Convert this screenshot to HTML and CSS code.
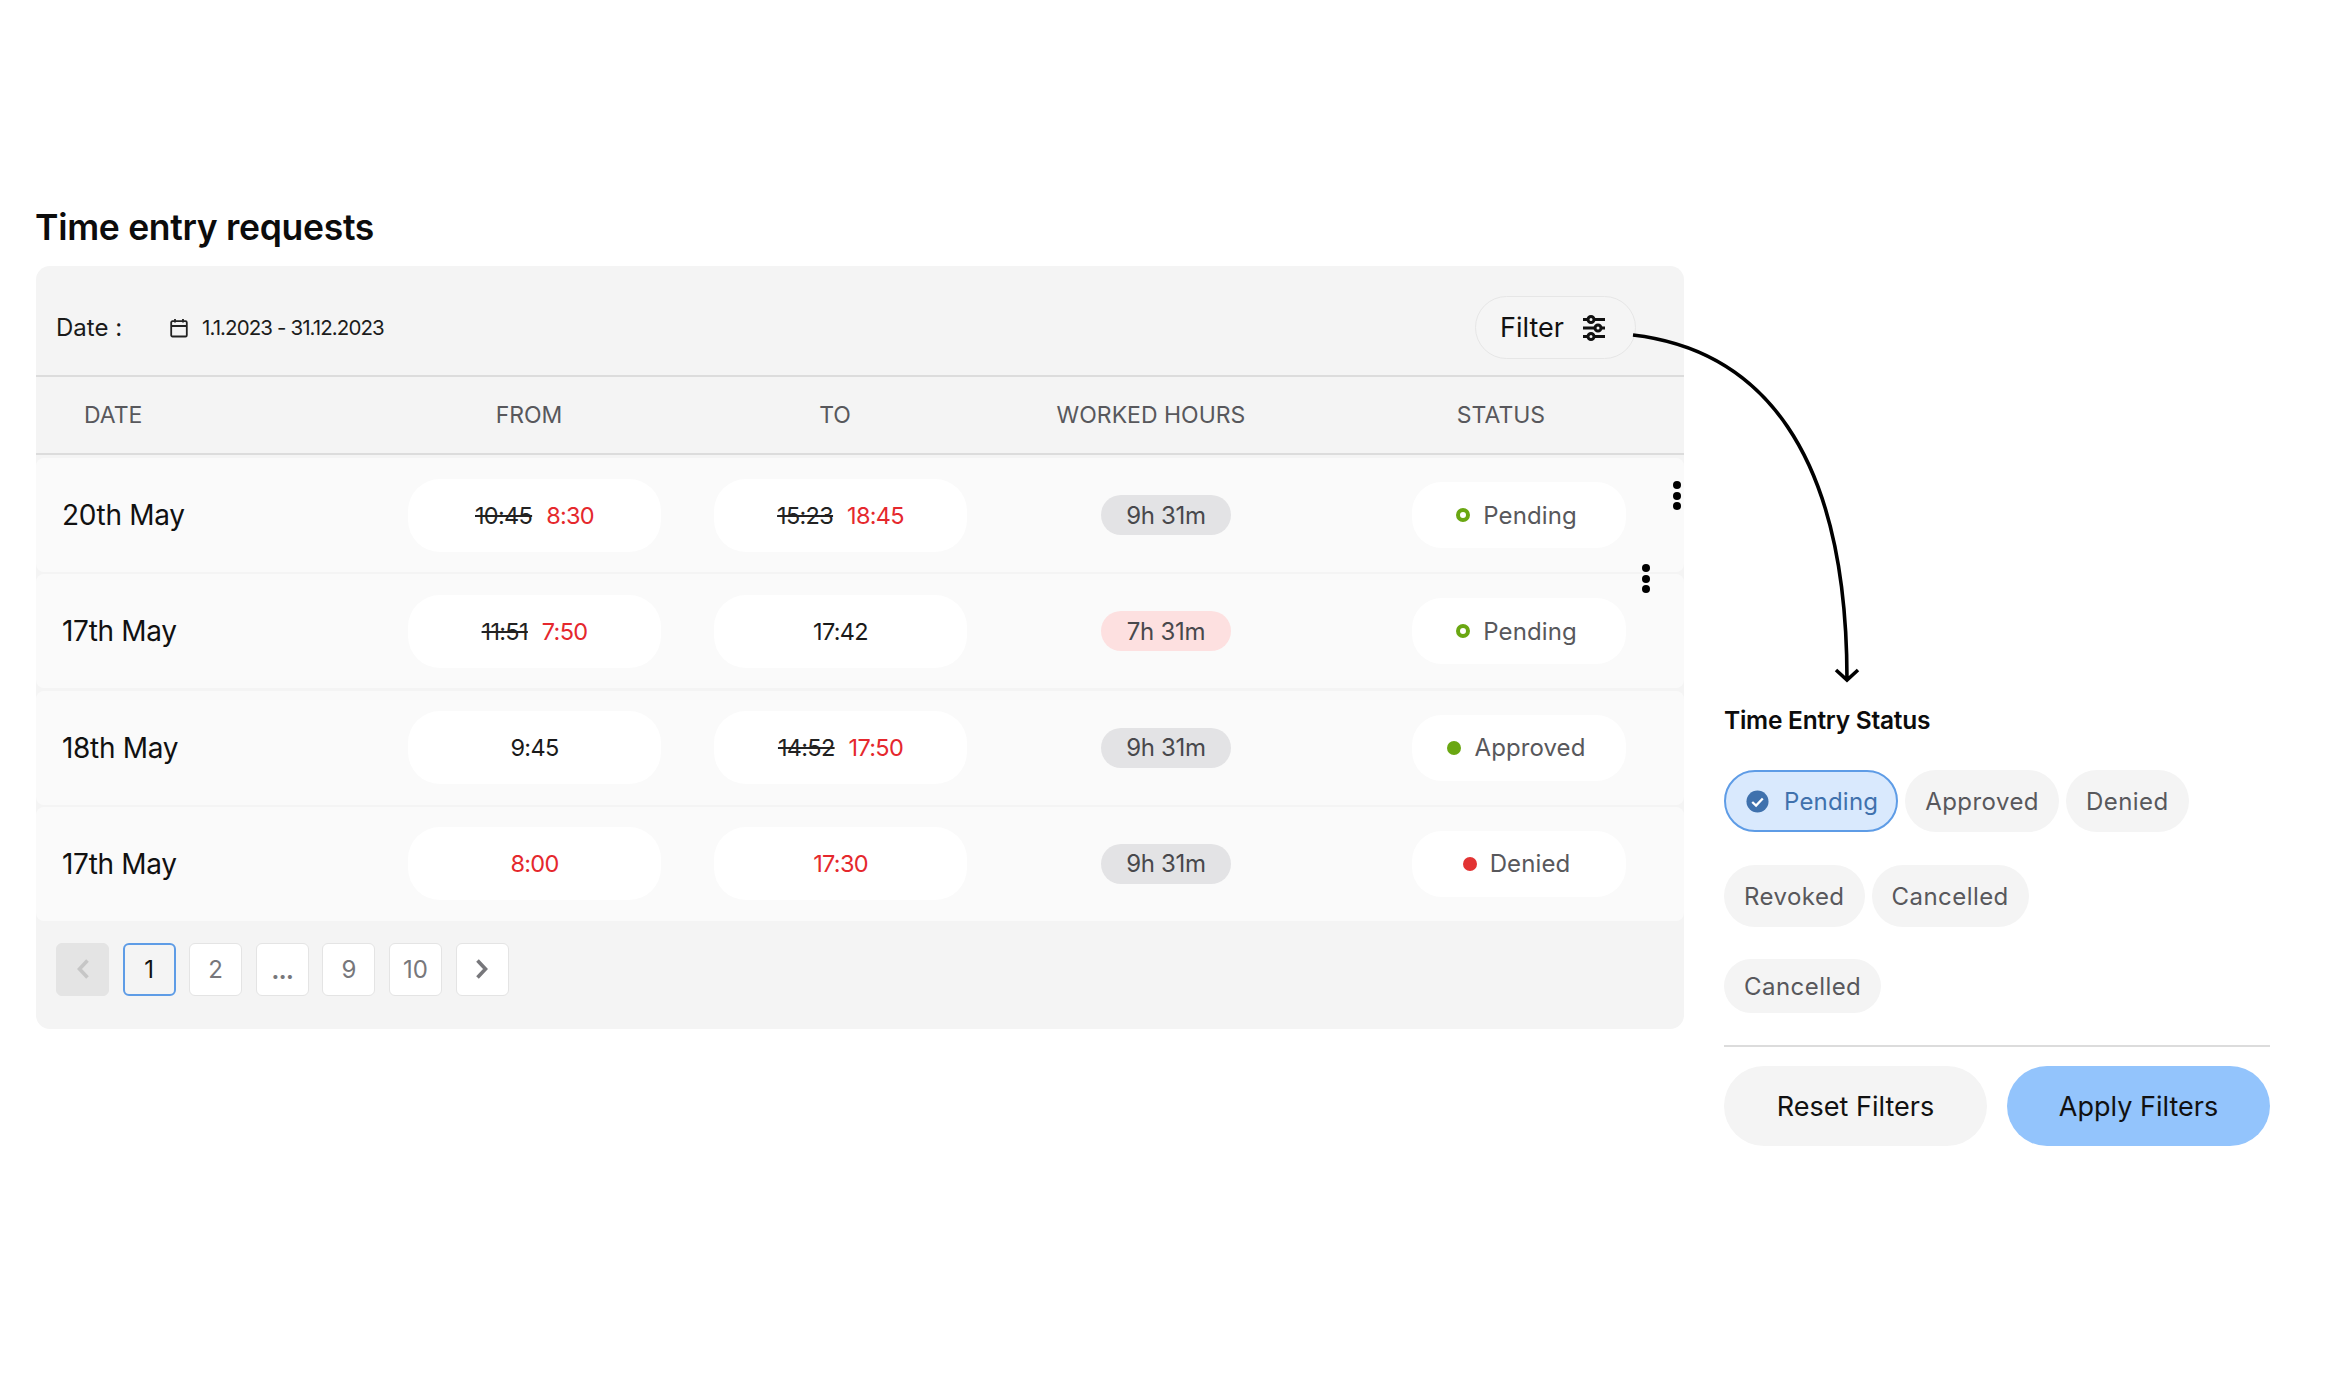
FILE: index.html
```html
<!DOCTYPE html>
<html lang="en">
<head>
<meta charset="utf-8">
<title>Time entry requests</title>
<link rel="stylesheet" href="styles.css">
</head>
<body>
<div class="page">
  <section class="main">
    <h1 class="title">Time entry requests</h1>
    <div class="card">
      <div class="toolbar">
        <span class="date-label">Date :</span>
        <svg class="cal" viewBox="0 0 18 20" width="18" height="20"><path d="M1.2 4.5a1.3 1.3 0 0 1 1.3-1.3h13a1.3 1.3 0 0 1 1.3 1.3v12.7a1.3 1.3 0 0 1-1.3 1.3h-13a1.3 1.3 0 0 1-1.3-1.3zM1.2 8h15.6M5 1v3.5M13 1v3.5" fill="none" stroke="#222" stroke-width="1.8"/></svg>
        <span class="date-range">1.1.2023 - 31.12.2023</span>
        <button class="filter-btn">Filter
          <svg viewBox="0 0 24 26" width="24" height="26"><g fill="none" stroke="#111" stroke-width="3"><path d="M1 4.5h5M12 4.5h11M1 13h12M19 13h4M1 21.5h5M12 21.5h11"/><circle cx="9" cy="4.5" r="3"/><circle cx="16" cy="13" r="3"/><circle cx="9" cy="21.5" r="3"/></g></svg>
        </button>
      </div>
      <div class="thead">
        <span>DATE</span><span class="c">FROM</span><span class="c">TO</span><span class="c">WORKED HOURS</span><span class="c">STATUS</span>
      </div>
      <div class="rows">
        <div class="row">
          <span class="day">20th May</span>
          <div class="time"><s>10:45</s><span class="red">8:30</span></div>
          <div class="time"><s>15:23</s><span class="red">18:45</span></div>
          <span class="hours">9h 31m</span>
          <div class="status"><i class="dot ring"></i>Pending</div>
        </div>
        <div class="row">
          <span class="day">17th May</span>
          <div class="time"><s>11:51</s><span class="red">7:50</span></div>
          <div class="time">17:42</div>
          <span class="hours short">7h 31m</span>
          <div class="status"><i class="dot ring"></i>Pending</div>
        </div>
        <div class="row">
          <span class="day">18th May</span>
          <div class="time">9:45</div>
          <div class="time"><s>14:52</s><span class="red">17:50</span></div>
          <span class="hours">9h 31m</span>
          <div class="status"><i class="dot green"></i>Approved</div>
        </div>
        <div class="row">
          <span class="day">17th May</span>
          <div class="time"><span class="red">8:00</span></div>
          <div class="time"><span class="red">17:30</span></div>
          <span class="hours">9h 31m</span>
          <div class="status"><i class="dot redd"></i>Denied</div>
        </div>
      </div>
      <nav class="pager">
        <a class="pg disabled"><svg viewBox="0 0 14 24" width="14" height="24"><path d="M11.500 3.500 3.500 12l8 8.500" fill="none" stroke="#c6c6c6" stroke-width="3.600"/></svg></a>
        <a class="pg active">1</a>
        <a class="pg">2</a>
        <a class="pg dots">...</a>
        <a class="pg">9</a>
        <a class="pg">10</a>
        <a class="pg"><svg viewBox="0 0 14 24" width="14" height="24"><path d="M2.500 3.500 10.500 12l-8 8.500" fill="none" stroke="#77777b" stroke-width="3.600"/></svg></a>
      </nav>
      <span class="kebab k1"><i></i><i></i><i></i></span>
      <span class="kebab k2"><i></i><i></i><i></i></span>
    </div>
  </section>
  <aside class="panel">
    <h2 class="panel-title">Time Entry Status</h2>
    <div class="chips">
      <div class="chip-row">
        <span class="chip on"><svg viewBox="0 0 24 24" width="23" height="23"><circle cx="12" cy="12" r="11.500" fill="#3f71ad"/><path d="M6.500 12.500l4 3.800 7-7.500" fill="none" stroke="#fff" stroke-width="2.400"/></svg>Pending</span>
        <span class="chip">Approved</span>
        <span class="chip">Denied</span>
      </div>
      <div class="chip-row">
        <span class="chip">Revoked</span>
        <span class="chip">Cancelled</span>
      </div>
      <div class="chip-row">
        <span class="chip low">Cancelled</span>
      </div>
    </div>
    <div class="actions">
      <button class="act">Reset Filters</button>
      <button class="act primary">Apply Filters</button>
    </div>
  </aside>
  <svg class="arrow" viewBox="0 0 2328 1376" width="2328" height="1376"><path d="M1633 335C1760 350 1847 450 1847 680M1836 670l11 10 11-10" fill="none" stroke="#000" stroke-width="3.600"/></svg>
</div>
</body>
</html>
```
FILE: styles.css
```css
* { box-sizing: border-box; }
html, body { margin: 0; background: #fff; }
body { font-family: Inter, "Open Sans", "Liberation Sans", sans-serif; color: #111; }
.page { position: relative; width: 2328px; height: 1376px; display: flex; gap: 40px; padding-left: 36px; overflow: hidden; }
.main { width: 1648px; padding-top: 203px; flex: none; }
.title { margin: 0 0 14px -1px; font-size: 35.5px; line-height: 49px; font-weight: 600; letter-spacing: -.3px; color: #0c0c0c; }
.card { position: relative; background: #f4f4f4; border-radius: 14px; height: 763px; }
.toolbar { height: 111px; border-bottom: 2px solid #dcdcdc; display: flex; align-items: center; padding: 14px 48px 0 20px; }
.date-label { font-size: 24px; color: #1a1a1a; width: 114px; }
.cal { flex: none; margin-right: 14px; }
.date-range { font-size: 20.5px; color: #1c1c1c; letter-spacing: -.9px; }
.filter-btn { margin-left: auto; width: 161px; height: 63px; border: 1.5px solid #e6e6e6; background: #f5f5f5; border-radius: 32px; font: 400 27px Inter, sans-serif; color: #111; display: flex; align-items: center; justify-content: center; gap: 18px; padding: 0 5px 0 0; }
.thead { height: 78px; border-bottom: 2px solid #dcdcdc; display: grid; grid-template-columns: 260px 242px 242px 262px 310px; column-gap: 64px; align-items: center; padding-left: 48px; font-size: 23px; color: #58585c; }
.thead .c { text-align: center; }
.rows { display: flex; flex-direction: column; gap: 2.33px; padding-top: 3px; }
.row { height: 114px; background: #fafafa; border-radius: 8px; display: grid; grid-template-columns: 293px 253px 253px 339px 214px; column-gap: 53px; align-items: center; padding-left: 26px; }
.day { font-size: 28px; color: #111; letter-spacing: -.3px; }
.time { height: 73px; background: #fff; border-radius: 32px; display: flex; align-items: center; justify-content: center; gap: 14px; font-size: 23.5px; color: #1a1a1a; letter-spacing: -.7px; }
.time s { color: #222; }
.red { color: #e5282d; }
.hours { justify-self: start; margin-left: 81px; width: 130px; height: 40px; border-radius: 20px; background: #e3e3e5; display: flex; align-items: center; justify-content: center; font-size: 24px; color: #48484c; letter-spacing: -.3px; }
.hours.short { background: #fde0e0; }
.status { height: 66px; background: #fff; border-radius: 30px; display: flex; align-items: center; justify-content: center; gap: 13px; font-size: 24px; color: #58585c; letter-spacing: .1px; padding-right: 5px; }
.dot { width: 14px; height: 14px; border-radius: 50%; flex: none; }
.dot.ring { border: 4px solid #6aa712; }
.dot.green { background: #6aa712; }
.dot.redd { background: #e23333; }
.pager { display: flex; gap: 13.6px; padding: 22px 0 0 20px; }
.pg { width: 53px; height: 53px; border: 1.5px solid #e4e4e4; background: #fff; border-radius: 6px; display: flex; align-items: center; justify-content: center; font-size: 24px; color: #77777b; }
.pg.disabled { background: #e4e4e4; border-color: #e4e4e4; }
.pg.active { background: #f4f4f4; border: 2px solid #5e9ce6; color: #111; }
.pg.dots { align-items: flex-end; padding-bottom: 13px; line-height: 1; font-size: 22px; font-weight: 800; letter-spacing: -.5px; }
.kebab { position: absolute; width: 8px; display: flex; flex-direction: column; gap: 2.5px; }
.kebab i { width: 8px; height: 8px; border-radius: 50%; background: #000; }
.k1 { left: 1637px; top: 215px; }
.k2 { left: 1606px; top: 298px; }
.panel { width: 546px; flex: none; padding-top: 703px; }
.panel-title { margin: 0 0 33px; font-size: 24.5px; line-height: 34px; font-weight: 600; color: #0c0c0c; letter-spacing: -.25px; }
.chips { display: flex; flex-direction: column; gap: 33px; padding-bottom: 32px; border-bottom: 2px solid #dcdcdc; }
.chip-row { display: flex; gap: 7px; }
.chip-row + .chip-row + .chip-row { margin-top: -1px; }
.chip { height: 62px; padding: 0 20px; border-radius: 31px; background: #f4f4f4; display: flex; align-items: center; font-size: 24px; color: #58585c; letter-spacing: .45px; }
.chip.low { height: 54px; }
.chip.on { background: #d9e9fd; border: 2px solid #5e9ce6; color: #3f71ad; gap: 15px; padding: 0 18px 0 20px; letter-spacing: .2px; }
.actions { display: flex; justify-content: space-between; margin-top: 19px; }
.act { width: 263px; height: 80px; border: 0; border-radius: 40px; background: #f4f4f4; font: 400 27px Inter, sans-serif; color: #111; }
.act.primary { background: #93c4fc; }
.arrow { position: absolute; left: 0; top: 0; pointer-events: none; }
```
